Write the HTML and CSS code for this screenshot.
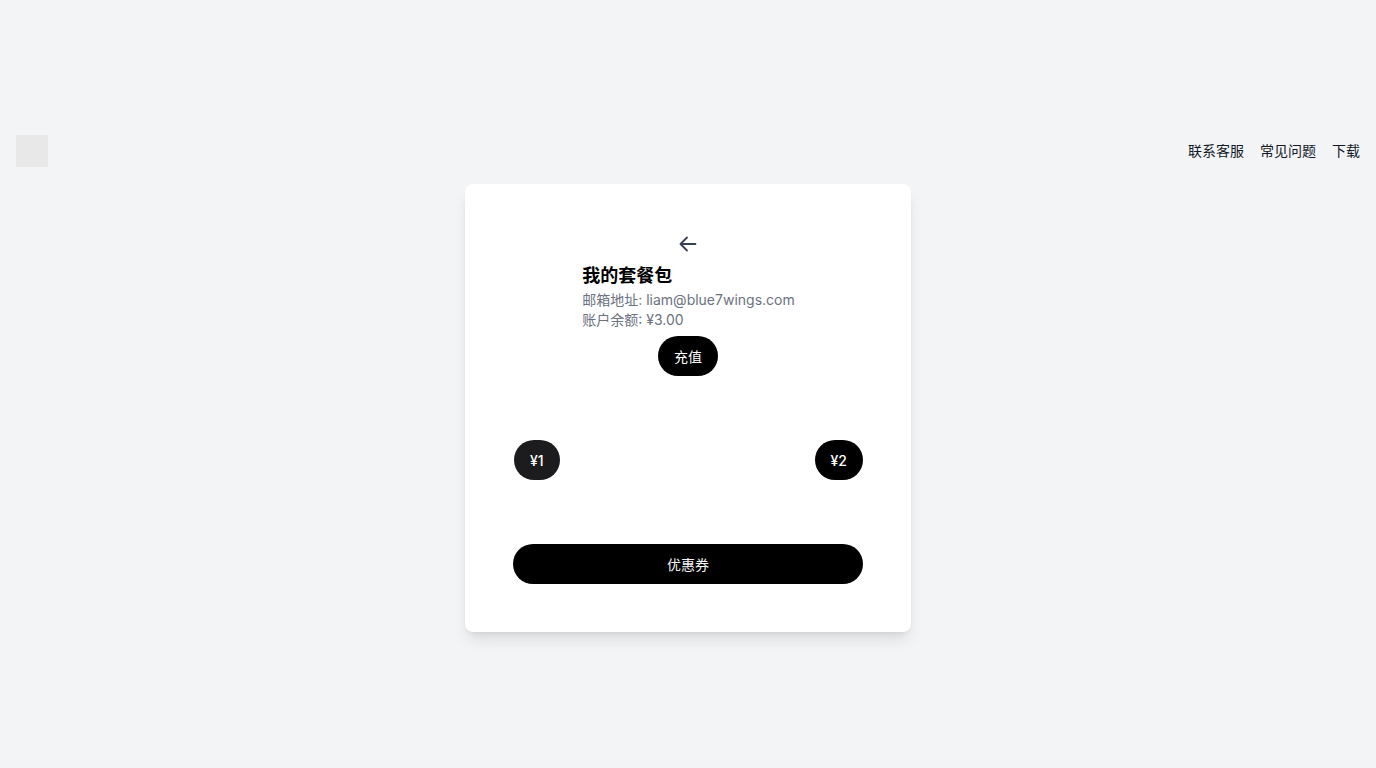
FILE: index.html
```html
<!DOCTYPE html>
<html lang="zh-CN">
  <head>
    <meta charset="UTF-8" />
    <meta name="viewport" content="width=device-width, initial-scale=1.0" />
    <title>我的套餐包</title>
    <link rel="stylesheet" href="styles.css">
  </head>
  <body>
    <div class="page">
      <!-- 顶部导航 -->
      <header class="header">
        <div class="logo"></div>
        <nav class="nav">
          <a href="#">联系客服</a>
          <a href="#">常见问题</a>
          <a href="#">下载</a>
        </nav>
      </header>

      <!-- 套餐卡片 -->
      <div class="card">
        <div class="back">
          <svg width="24" height="24" viewBox="0 0 24 24" fill="none" stroke="currentColor" stroke-width="1.8" stroke-linecap="round" stroke-linejoin="round">
            <path d="M11 18.5 4.5 12 11 5.5M4.5 12h15" />
          </svg>
        </div>
        <div class="info">
          <h1 class="title">我的套餐包</h1>
          <p class="meta">邮箱地址: liam@blue7wings.com</p>
          <p class="meta">账户余额: ¥3.00</p>
        </div>
        <div class="recharge-row">
          <button class="pill">充值</button>
        </div>
        <div class="prices">
          <button class="pill price soft">¥1</button>
          <button class="pill price">¥2</button>
        </div>
        <button class="pill wide">优惠券</button>
      </div>
    </div>
  </body>
</html>
```

FILE: styles.css
```css
* {
  box-sizing: border-box;
}

body {
  margin: 0;
  background-color: #f3f4f6;
  font-family: Inter, "Noto Sans CJK SC", sans-serif;
  color: #111827;
}

.page {
  min-height: 100vh;
  display: flex;
  flex-direction: column;
  justify-content: center;
  align-items: center;
  padding-bottom: 1px;
}

.header {
  width: 100%;
  display: flex;
  justify-content: space-between;
  align-items: center;
  padding: 0 16px;
  margin-bottom: 17px;
}

.logo {
  width: 32px;
  height: 32px;
  background-color: #e8e8e8;
}

.nav {
  display: flex;
  gap: 16px;
}

.nav a {
  font-size: 14px;
  line-height: 20px;
  color: #111827;
  text-decoration: none;
}

.card {
  width: 446px;
  background-color: #fff;
  border-radius: 8px;
  box-shadow: 0 10px 15px -3px rgba(0, 0, 0, 0.1), 0 4px 6px -4px rgba(0, 0, 0, 0.1);
  padding: 48px;
  display: flex;
  flex-direction: column;
}

.back {
  display: flex;
  justify-content: center;
  color: #374151;
  height: 24px;
}

.info {
  align-self: center;
  margin-top: 6px;
  padding-left: 1px;
}

.title {
  margin: 0;
  font-size: 18px;
  line-height: 28px;
  font-weight: 700;
  color: #000;
}

.meta {
  margin: 0;
  font-size: 14px;
  line-height: 20px;
  color: #6b7280;
}

.recharge-row {
  display: flex;
  justify-content: center;
  margin-top: 6px;
}

.pill {
  height: 40px;
  padding: 0 16px;
  border: none;
  border-radius: 9999px;
  background-color: #000;
  color: #fff;
  font-family: inherit;
  font-size: 14px;
  cursor: pointer;
}

.pill.price {
  font-weight: 500;
}

.pill.soft {
  background-color: #1c1c1e;
  margin-left: 1px;
}

.prices {
  display: flex;
  justify-content: space-between;
  margin-top: 64px;
}

.wide {
  width: 100%;
  margin-top: 64px;
  color: #f3f4f6;
}
```
